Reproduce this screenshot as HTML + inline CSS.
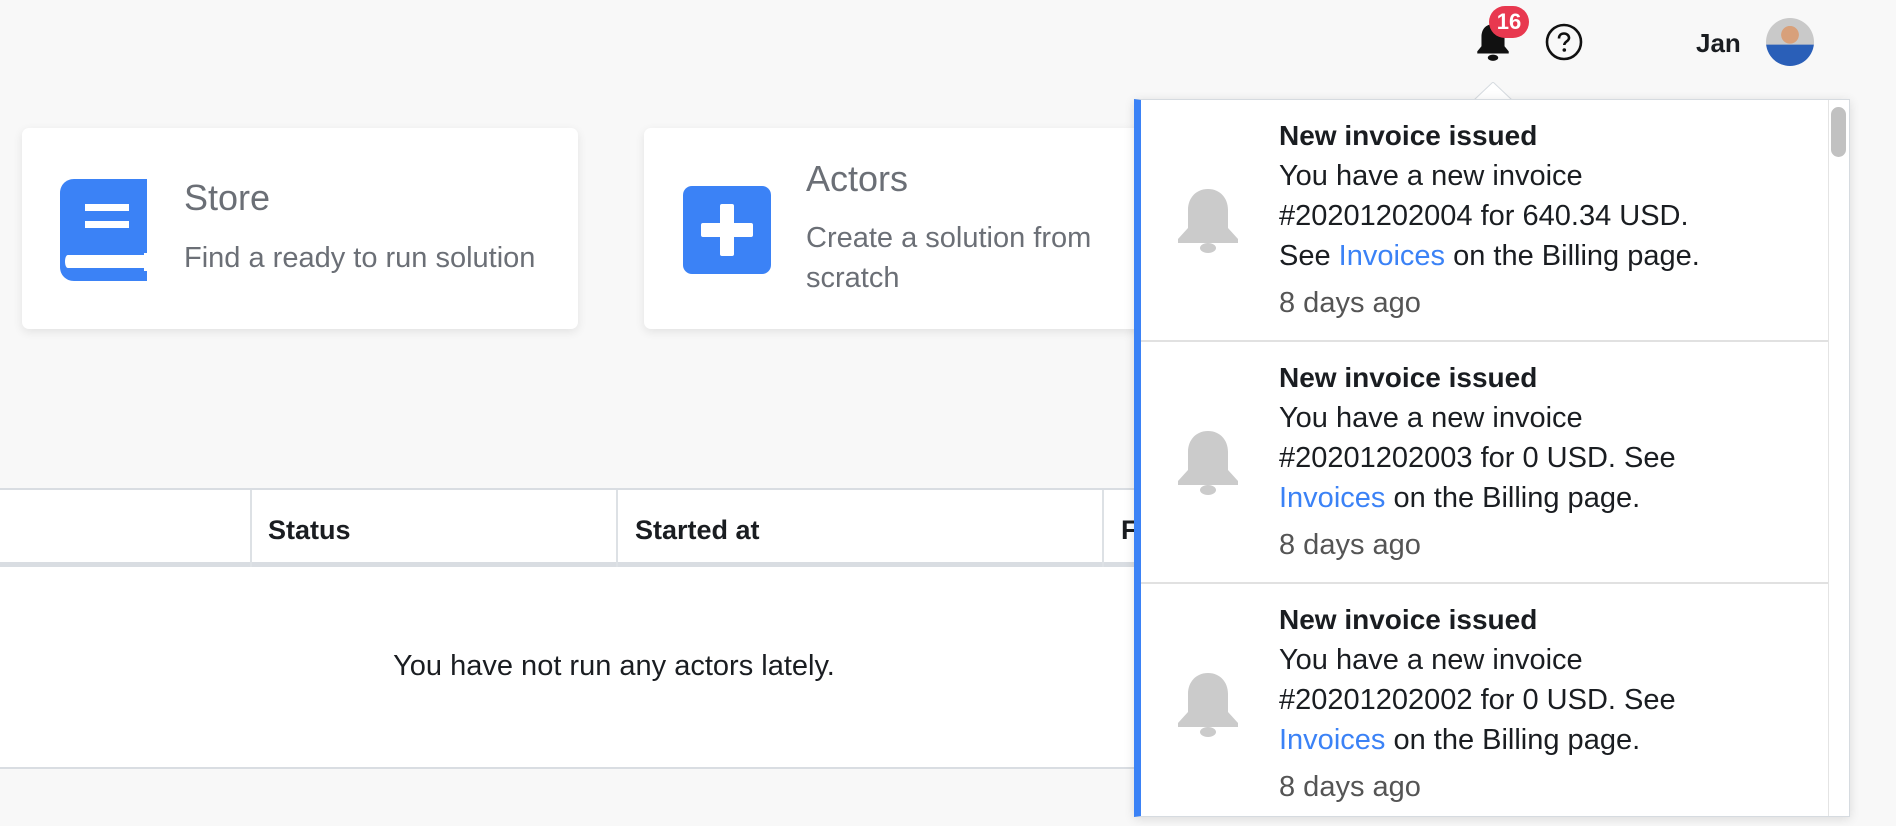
<!DOCTYPE html>
<html><head><meta charset="utf-8"><style>
*{box-sizing:border-box;margin:0;padding:0}
body{width:1896px;height:826px;overflow:hidden;background:#f8f8f8;font-family:"Liberation Sans",sans-serif;position:relative;color:#1a1d21}
.card{position:absolute;background:#fff;border-radius:7px;box-shadow:0 3px 10px rgba(0,0,0,.09)}
.ct{position:absolute;color:#6b6f76;font-size:36px}
.cs{position:absolute;color:#6b6f76;font-size:29px;line-height:40px}
.tbl{position:absolute;left:0;top:488px;width:1140px;height:281px;background:#fff;border-top:2px solid #d9dde2;border-bottom:2px solid #d9dde2}
.th{position:absolute;top:0;height:77px;border-bottom:5px solid #d9dde2;width:100%}
.sep{position:absolute;top:0;width:2px;height:77px;background:#dde1e5}
.hd{position:absolute;top:25px;font-size:27px;font-weight:bold;color:#1a1d21}
.pop{position:absolute;left:1134px;top:99px;width:716px;height:718px;background:#fff;border:1px solid #d6dbe0;border-left:7px solid #3b82f6;box-shadow:0 2px 10px rgba(0,0,0,.12);overflow:hidden}
.item{position:absolute;left:0;width:687px;height:242px;border-bottom:2px solid #e1e1e1}
.txt{position:absolute;left:138px;top:16px;font-size:29px;line-height:40px;color:#1a1d21;white-space:nowrap}
.txt b{display:block;font-size:28px}
.txt a{color:#3b82f6;text-decoration:none}
.ago{color:#555;margin-top:7px}
.gb{position:absolute;left:35px;top:87px}
</style></head><body>

<svg style="position:absolute;left:1473px;top:20px" width="40" height="44" viewBox="0 0 38 42"><path d="M19 4c-7 0-11 5-11 12v9l-4 5v2h30v-2l-4-5v-9c0-7-4-12-11-12z" fill="#111"/><ellipse cx="19" cy="36" rx="5" ry="3" fill="#111"/></svg>
<div style="position:absolute;left:1489px;top:6px;width:40px;height:32px;border-radius:16px;background:#e8384f;color:#fff;font-weight:bold;font-size:22px;text-align:center;line-height:32px">16</div>
<svg style="position:absolute;left:1545px;top:23px" width="38" height="38" viewBox="0 0 38 38"><circle cx="19" cy="19" r="17" fill="none" stroke="#111" stroke-width="2.6"/><path d="M14 15.5c0-3.3 2.3-5 5-5s5 1.8 5 4.5c0 3.3-4.7 3.5-4.7 7" fill="none" stroke="#111" stroke-width="2.6"/><circle cx="19.3" cy="27" r="1.8" fill="#111"/></svg>
<div style="position:absolute;left:1696px;top:28px;font-size:26px;font-weight:bold;color:#1a1d21">Jan</div>
<div style="position:absolute;left:1766px;top:18px;width:48px;height:48px;border-radius:50%;background:radial-gradient(circle at 50% 35%,#d8a07a 0 22%,transparent 23%),linear-gradient(to bottom,#c9c9c9 0 55%,#2a5fb8 56%);"></div>

<div class="card" style="left:22px;top:128px;width:556px;height:201px"></div>
<svg style="position:absolute;left:60px;top:179px" width="90" height="102" viewBox="0 0 90 102"><path d="M14 0h73v102H14C6 102 0 96 0 88V14C0 6 6 0 14 0z" fill="#3b82f6"/><rect x="25" y="25" width="44" height="7" fill="#fff"/><rect x="25" y="42" width="44" height="7" fill="#fff"/><path d="M8 76h77v13H8c-4 0-4-13 0-13z" fill="#fff"/><rect x="84" y="74" width="6" height="18" fill="#fff"/></svg>
<div class="ct" style="left:184px;top:177px">Store</div>
<div class="cs" style="left:184px;top:238px">Find a ready to run solution</div>

<div class="card" style="left:644px;top:128px;width:520px;height:201px"></div>
<svg style="position:absolute;left:683px;top:186px" width="88" height="88" viewBox="0 0 88 88"><rect width="88" height="88" rx="9" fill="#3b82f6"/><rect x="37" y="18" width="14" height="52" rx="2" fill="#fff"/><rect x="18" y="37" width="52" height="14" rx="2" fill="#fff"/></svg>
<div class="ct" style="left:806px;top:158px">Actors</div>
<div class="cs" style="left:806px;top:218px">Create a solution from<br>scratch</div>

<div class="tbl">
<div class="th"></div>
<div class="sep" style="left:250px"></div>
<div class="sep" style="left:616px"></div>
<div class="sep" style="left:1102px"></div>
<div class="hd" style="left:268px">Status</div>
<div class="hd" style="left:635px">Started at</div>
<div class="hd" style="left:1121px">F</div>
<div style="position:absolute;left:0;width:1228px;top:160px;text-align:center;font-size:29px;color:#1a1d21">You have not run any actors lately.</div>
</div>

<svg style="position:absolute;left:1474px;top:82px" width="38" height="19" viewBox="0 0 38 19"><path d="M0 18L19 0L38 18" fill="#fff" stroke="#d6dbe0" stroke-width="1"/></svg>

<div class="pop">
<div class="item" style="top:0">
<svg class="gb" width="64" height="68" viewBox="0 0 64 68"><path d="M32 2C20 2 12 11 12 23v18L2 52v4h60v-4L52 41V23C52 11 44 2 32 2z" fill="#cbcbcb"/><ellipse cx="32" cy="61" rx="8" ry="5" fill="#cbcbcb"/></svg>
<div class="txt"><b>New invoice issued</b>You have a new invoice<br>#20201202004 for 640.34 USD.<br>See <a>Invoices</a> on the Billing page.<div class="ago">8 days ago</div></div>
</div>
<div class="item" style="top:242px">
<svg class="gb" width="64" height="68" viewBox="0 0 64 68"><path d="M32 2C20 2 12 11 12 23v18L2 52v4h60v-4L52 41V23C52 11 44 2 32 2z" fill="#cbcbcb"/><ellipse cx="32" cy="61" rx="8" ry="5" fill="#cbcbcb"/></svg>
<div class="txt"><b>New invoice issued</b>You have a new invoice<br>#20201202003 for 0 USD. See<br><a>Invoices</a> on the Billing page.<div class="ago">8 days ago</div></div>
</div>
<div class="item" style="top:484px">
<svg class="gb" width="64" height="68" viewBox="0 0 64 68"><path d="M32 2C20 2 12 11 12 23v18L2 52v4h60v-4L52 41V23C52 11 44 2 32 2z" fill="#cbcbcb"/><ellipse cx="32" cy="61" rx="8" ry="5" fill="#cbcbcb"/></svg>
<div class="txt"><b>New invoice issued</b>You have a new invoice<br>#20201202002 for 0 USD. See<br><a>Invoices</a> on the Billing page.<div class="ago">8 days ago</div></div>
</div>
<div style="position:absolute;left:687px;top:0;width:1px;height:718px;background:#e4e4e4"></div>
<div style="position:absolute;left:690px;top:7px;width:15px;height:50px;border-radius:8px;background:#c1c1c1"></div>
</div>
</body></html>
